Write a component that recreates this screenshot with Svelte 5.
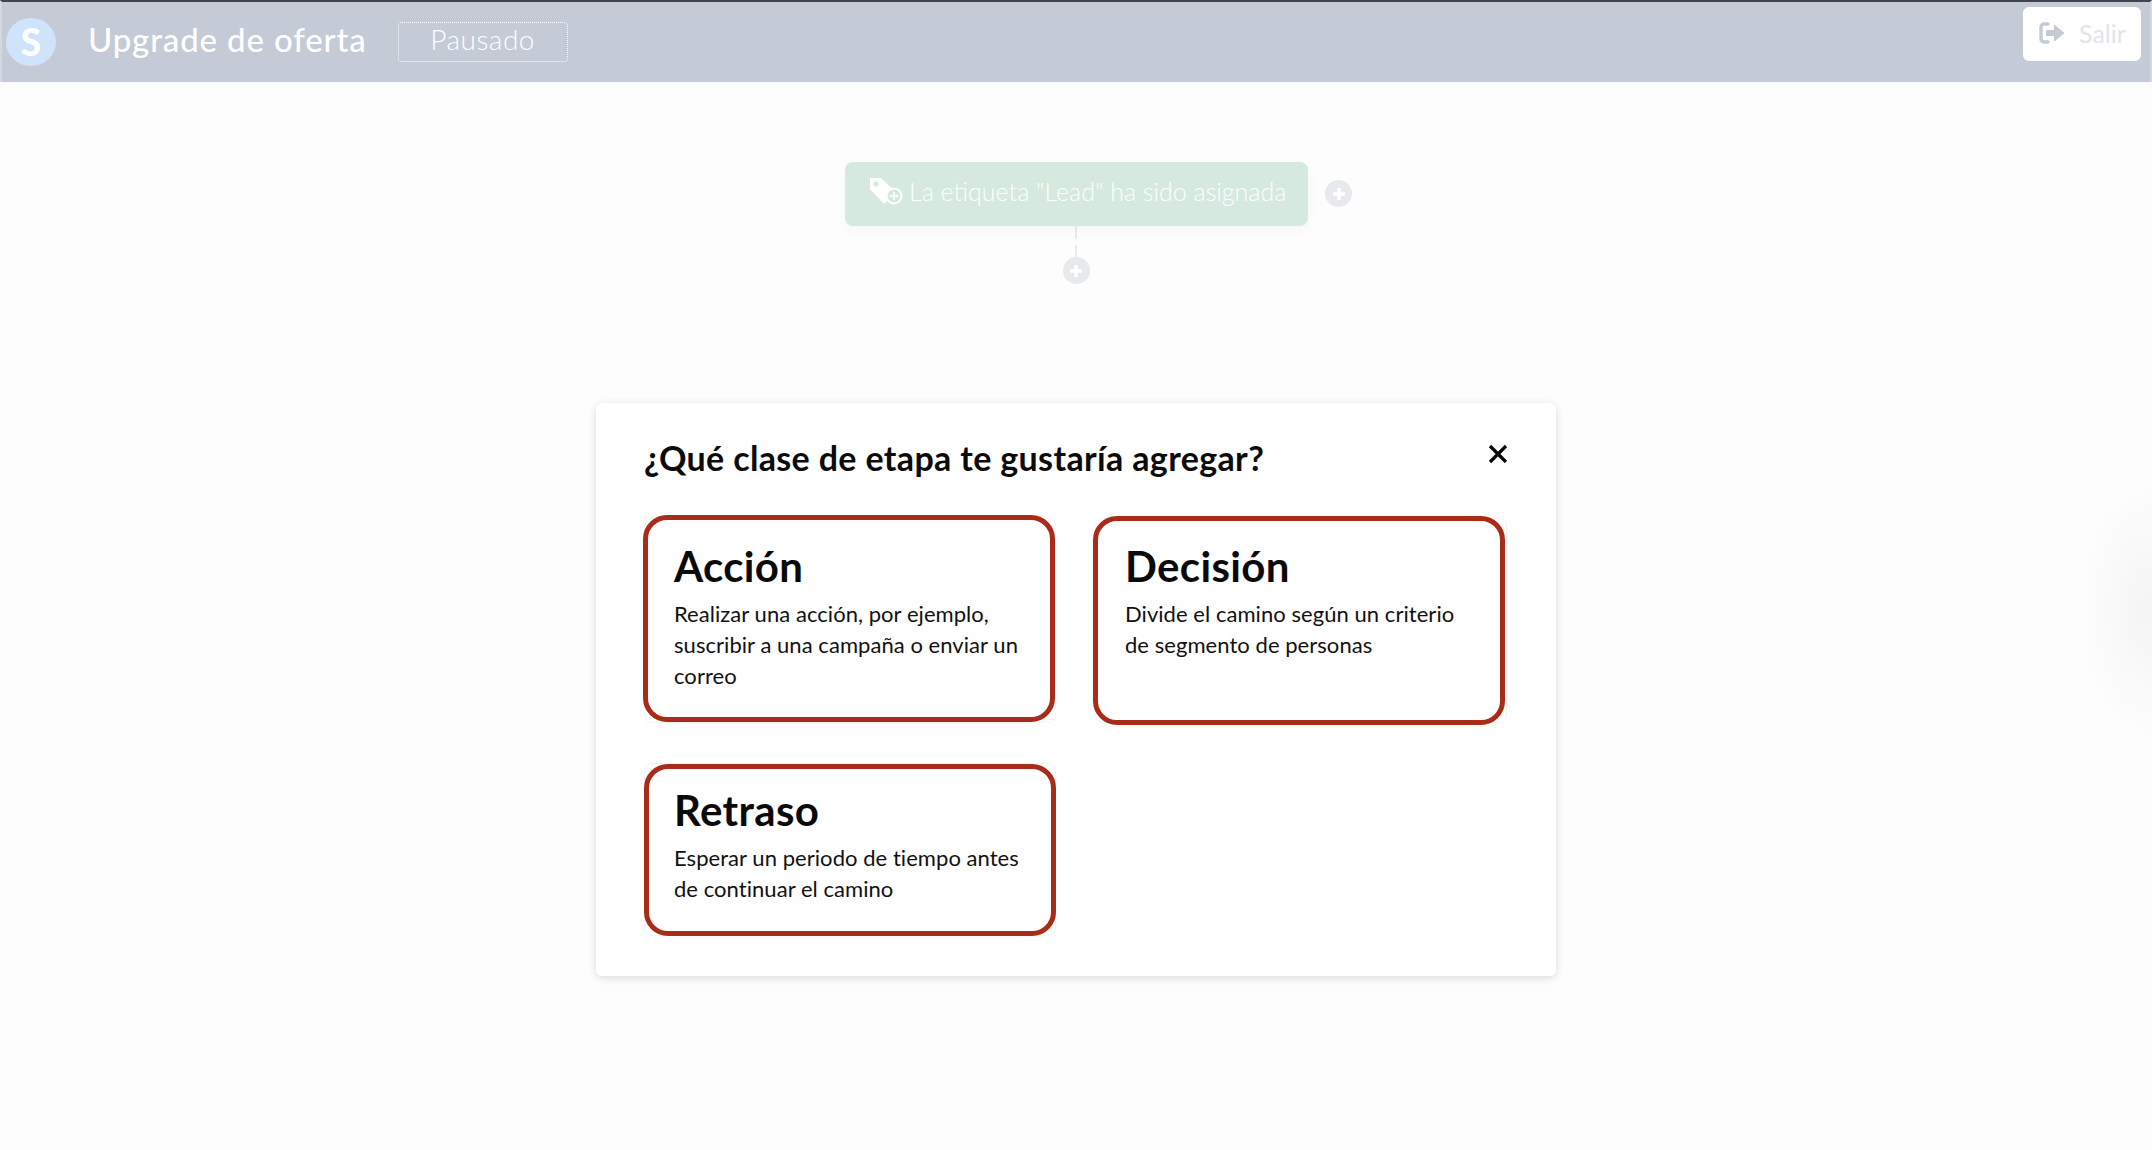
<script>
  const steps = [
    { id: 'accion', title: 'Acción', text: 'Realizar una acción, por ejemplo, suscribir a una campaña o enviar un correo' },
    { id: 'decision', title: 'Decisión', text: 'Divide el camino según un criterio de segmento de personas' },
    { id: 'retraso', title: 'Retraso', text: 'Esperar un periodo de tiempo antes de continuar el camino' }
  ];
</script>

<div class="page">
  <header class="topbar">
    <div class="logo">S</div>
    <h1>Upgrade de oferta</h1>
    <span class="status">Pausado</span>
    <button type="button" class="exit">
      <svg width="26" height="22" viewBox="0 0 26 22" aria-hidden="true">
        <path d="M9 2H5a3 3 0 0 0-3 3v12a3 3 0 0 0 3 3h4" fill="none" stroke="#c4cad6" stroke-width="3.4" stroke-linecap="round" />
        <path d="M8 8h7V3.500a.6.6 0 0 1 1-.4l9 7.300a.8.8 0 0 1 0 1.200l-9 7.300a.6.6 0 0 1-1-.4V14H8a1 1 0 0 1-1-1V9a1 1 0 0 1 1-1z" fill="#c4cad6" />
      </svg>
      <span>Salir</span>
    </button>
  </header>

  <section class="canvas">
    <div class="flow-row">
      <div class="node">
        <svg width="34" height="28" viewBox="0 0 34 28" aria-hidden="true">
          <path d="M1 1h11l14 13-11 13L1 12z" fill="#fff" />
          <circle cx="7" cy="7" r="2.600" fill="#d5e9df" />
          <circle cx="25" cy="19" r="7.500" fill="#d5e9df" stroke="#fff" stroke-width="2" />
          <path d="M25 15v8M21 19h8" stroke="#fff" stroke-width="2" />
        </svg>
        <span>La etiqueta "Lead" ha sido asignada</span>
      </div>
      <div class="plus side">
        <svg width="14" height="14" viewBox="0 0 14 14"><path d="M7 1v12M1 7h12" stroke="#fff" stroke-width="3.400" /></svg>
      </div>
    </div>
    <div class="link top"></div>
    <div class="link"></div>
    <div class="plus">
      <svg width="14" height="14" viewBox="0 0 14 14"><path d="M7 1v12M1 7h12" stroke="#fff" stroke-width="3.400" /></svg>
    </div>
  </section>

  <div class="edge-glow"></div>

  <div class="modal">
    <div class="modal-head">
      <h2>¿Qué clase de etapa te gustaría agregar?</h2>
      <button type="button" class="close" aria-label="Cerrar">
        <svg width="20" height="20" viewBox="0 0 20 20"><path d="M2 2l16 16M18 2L2 18" stroke="#000" stroke-width="3.200" /></svg>
      </button>
    </div>
    <div class="grid">
      {#each steps as step}
        <article class="card {step.id}">
          <h3>{step.title}</h3>
          <p>{step.text}</p>
        </article>
      {/each}
    </div>
  </div>
</div>

<style>
  :global(body) {
    margin: 0;
    background: #fdfdfd;
  }

  .page {
    position: relative;
    height: 1150px;
    overflow: hidden;
    font-family: Lato, "Open Sans", sans-serif;
  }

  .topbar {
    box-sizing: border-box;
    height: 82px;
    display: flex;
    align-items: center;
    background: #c4cad6;
    border-top: 2px solid #41454b;
    border-left: 2px solid #d3d8e0;
    border-right: 2px solid #d3d8e0;
    box-shadow: 0 2px 4px rgba(0, 0, 0, 0.02);
  }

  .logo {
    width: 50px;
    height: 48px;
    margin-left: 4px;
    border-radius: 50%;
    background: #cfe3fb;
    color: #fff;
    font-size: 37px;
    font-weight: 900;
    line-height: 48px;
    text-align: center;
  }

  h1 {
    margin: 0 0 6px 32px;
    color: #fff;
    font-size: 33px;
    font-weight: 500;
    letter-spacing: 0.85px;
  }

  .status {
    box-sizing: border-box;
    width: 170px;
    height: 40px;
    margin-left: 31px;
    border: 1px dotted #fff;
    border-radius: 4px;
    color: #fff;
    font-size: 28px;
    font-weight: 300;
    letter-spacing: 0.5px;
    line-height: 33px;
    text-align: center;
  }

  .exit {
    box-sizing: border-box;
    width: 118px;
    height: 54px;
    margin: -16px 9px 0 auto;
    padding: 0 0 2px 16px;
    display: flex;
    align-items: center;
    gap: 14px;
    border: 0;
    border-radius: 6px;
    background: #fff;
    color: #e1e4ea;
    font-family: inherit;
    font-size: 25px;
    font-weight: 400;
  }

  .canvas {
    display: flex;
    flex-direction: column;
    align-items: center;
    padding-top: 80px;
  }

  .flow-row {
    position: relative;
    display: flex;
    margin-left: 1px;
  }

  .node {
    box-sizing: border-box;
    width: 463px;
    height: 64px;
    display: flex;
    align-items: center;
    gap: 6px;
    padding: 0 0 6px 24px;
    border-radius: 8px;
    background: #d5e9df;
    box-shadow: 0 4px 12px rgba(0, 0, 0, 0.03);
    color: #fdfefd;
    font-size: 25px;
    font-weight: 300;
    white-space: nowrap;
  }

  .plus {
    width: 27px;
    height: 27px;
    display: flex;
    align-items: center;
    justify-content: center;
    border-radius: 50%;
    background: #e7e9ec;
  }

  .plus.side {
    position: absolute;
    left: 480px;
    top: 18px;
  }

  .link {
    width: 2px;
    height: 12px;
    background: #e8eaed;
  }

  .link.top {
    height: 13px;
    margin-bottom: 6px;
  }

  .edge-glow {
    position: absolute;
    right: -70px;
    top: 480px;
    width: 140px;
    height: 260px;
    border-radius: 50%;
    background: radial-gradient(closest-side, #f4f4f4, rgba(253, 253, 253, 0));
  }

  .modal {
    position: absolute;
    left: 596px;
    top: 403px;
    box-sizing: border-box;
    width: 960px;
    height: 573px;
    padding: 35px 49px 0 48px;
    border-radius: 6px;
    background: #fff;
    box-shadow: 0 2px 8px rgba(0, 0, 0, 0.14);
  }

  .modal-head {
    display: flex;
    justify-content: space-between;
    height: 80px;
  }

  h2 {
    margin: 0;
    color: #0b0b0b;
    font-size: 34px;
    font-weight: 700;
    letter-spacing: 0.35px;
    line-height: 40px;
  }

  .close {
    width: 20px;
    height: 20px;
    margin: 6px -1px 0 0;
    padding: 0;
    border: 0;
    background: none;
  }

  .grid {
    display: grid;
    grid-template-columns: 412px 412px;
    column-gap: 39px;
    row-gap: 40px;
    align-items: start;
  }

  .card {
    position: relative;
    box-sizing: border-box;
    height: 205px;
    padding: 23px 29px 0;
    border: 1px solid #f3f3f3;
    border-radius: 8px;
    background: #fff;
  }

  .card.retraso {
    height: 173px;
    padding-top: 22px;
  }

  /* red frame sits slightly off the card box, as in the original */
  .card::before {
    content: "";
    position: absolute;
    left: -2px;
    right: 0;
    top: -4px;
    bottom: 0;
    border: 5px solid #a92c18;
    border-radius: 24px;
    pointer-events: none;
  }

  .card.decision::before {
    left: -3px;
    right: 1px;
    top: -3px;
    bottom: -3px;
  }

  .card.retraso::before {
    left: -1px;
    right: -1px;
    top: 0;
    bottom: -1px;
  }

  h3 {
    margin: 0;
    color: #0a0a0a;
    font-size: 42px;
    font-weight: 700;
    letter-spacing: 0.35px;
    line-height: 48px;
  }

  p {
    margin: 8px 0 0;
    color: #111;
    font-size: 22px;
    font-weight: 400;
    letter-spacing: 0.05px;
    line-height: 31px;
  }
</style>
